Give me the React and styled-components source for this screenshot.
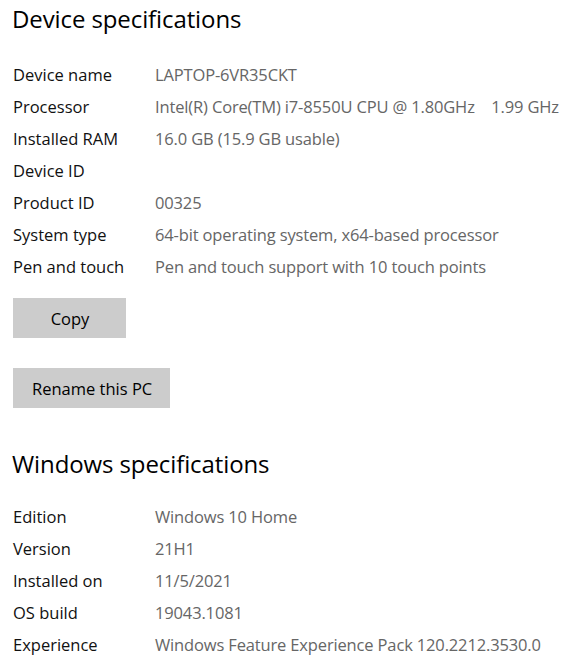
import React from "react";
import styled, { createGlobalStyle } from "styled-components";

const Global = createGlobalStyle`
  html, body { margin: 0; padding: 0; background: #ffffff; }
  body { font-family: "Open Sans", "Noto Sans", "Liberation Sans", sans-serif; color: #000; }
`;

const Page = styled.div`
  padding: 0 0 0 13px;
  display: flex;
  flex-direction: column;
`;

const Section = styled.section`
  display: flex;
  flex-direction: column;
`;

const Heading = styled.h2`
  margin: 0 0 ${(p) => p.$gap}px -1px;
  font-size: 24px;
  font-weight: 400;
  line-height: 38px;
  color: #000;
  letter-spacing: -0.1px;
`;

const SpecList = styled.dl`
  margin: 0;
  display: grid;
  grid-template-columns: 142px 1fr;
  grid-auto-rows: 32px;
`;

const Label = styled.dt`
  font-size: 16.5px;
  line-height: 32px;
  color: #111;
  white-space: nowrap;
`;

const Value = styled.dd`
  margin: 0;
  font-size: 16.5px;
  line-height: 32px;
  color: #666;
  white-space: pre;
  letter-spacing: -0.15px;
`;

const Button = styled.button`
  align-self: flex-start;
  height: 40px;
  min-width: 113px;
  padding: 0 18px 0 19px;
  margin-top: ${(p) => p.$top}px;
  border: none;
  background: #cccccc;
  font-family: inherit;
  font-size: 16.5px;
  color: #000;
  cursor: pointer;
`;

const SecondSection = styled(Section)`
  margin-top: 37px;
`;

const device = [
  ["Device name", "LAPTOP-6VR35CKT"],
  ["Processor", "Intel(R) Core(TM) i7-8550U CPU @ 1.80GHz    1.99 GHz"],
  ["Installed RAM", "16.0 GB (15.9 GB usable)"],
  ["Device ID", ""],
  ["Product ID", "00325"],
  ["System type", "64-bit operating system, x64-based processor"],
  ["Pen and touch", "Pen and touch support with 10 touch points"],
];

const windows = [
  ["Edition", "Windows 10 Home"],
  ["Version", "21H1"],
  ["Installed on", "11/5/2021"],
  ["OS build", "19043.1081"],
  ["Experience", "Windows Feature Experience Pack 120.2212.3530.0"],
];

function Specs({ items }) {
  return (
    <SpecList>
      {items.map(([k, v]) => (
        <React.Fragment key={k}>
          <Label>{k}</Label>
          <Value>{v}</Value>
        </React.Fragment>
      ))}
    </SpecList>
  );
}

export default function App() {
  return (
    <>
      <Global />
      <Page>
        <Section>
          <Heading $gap={21}>Device specifications</Heading>
          <Specs items={device} />
          <Button $top={15}>Copy</Button>
          <Button $top={30}>Rename this PC</Button>
        </Section>
        <SecondSection>
          <Heading $gap={18}>Windows specifications</Heading>
          <Specs items={windows} />
        </SecondSection>
      </Page>
    </>
  );
}
